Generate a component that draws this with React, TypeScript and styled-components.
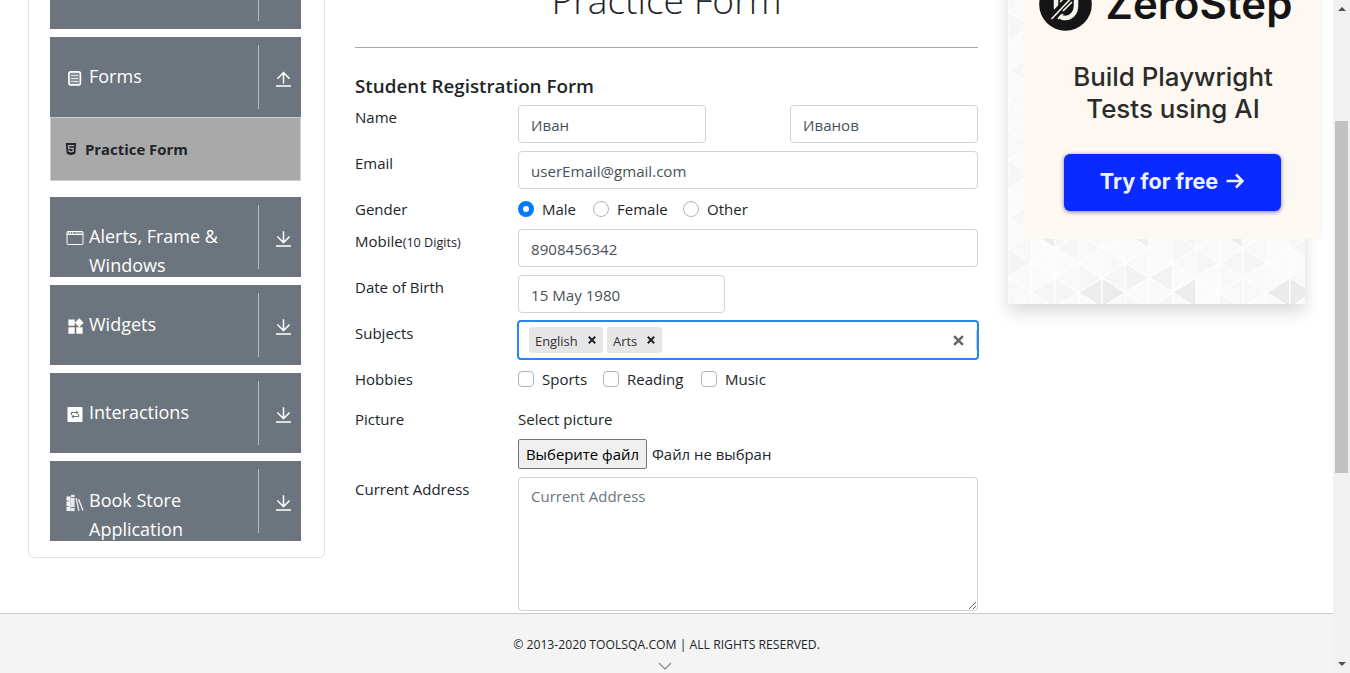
import React from 'react';
import styled, { createGlobalStyle } from 'styled-components';
import { MdWidgets } from 'react-icons/md';
import { FaHtml5 } from 'react-icons/fa';

const GlobalStyle = createGlobalStyle`
  *, *::before, *::after { box-sizing: border-box; }
  body {
    margin: 0;
    overflow: hidden;
    background: #fff;
    color: #212529;
    font: 400 15px/24px 'Open Sans', 'Noto Sans', sans-serif;
  }
`;

const Screen = styled.div`
  display: grid;
  grid-template-columns: minmax(0, 1fr) 17px;
  height: 673px;
  overflow: hidden;
`;

const Page = styled.div`
  display: flex;
  flex-direction: column;
  height: 673px;
  min-width: 0;
`;

const Columns = styled.main`
  display: grid;
  grid-template-columns: 297px 623px 315px;
  column-gap: 30px;
  align-items: start;
  height: 613px;
  padding-left: 28px;
  overflow: hidden;
`;

/* ---------- Sidebar ---------- */

const Sidebar = styled.nav`
  display: flex;
  flex-direction: column;
  gap: 8px;
  height: 658px;
  margin-top: -100px;
  padding: 0 23px 16px 21px;
  justify-content: flex-end;
  border: 1px solid #dee2e6;
  border-radius: 6px;
`;

const GroupHeader = styled.div`
  display: grid;
  grid-template-columns: 39px 169px 1fr;
  flex: none;
  width: 251px;
  height: 80px;
  overflow: hidden;
  background: #6c757d;
  color: #fff;
`;

const GroupIcon = styled.span`
  display: flex;
  justify-content: center;
  padding: 32px 0 0 11px;
  height: 52px;
  svg { display: block; }
`;

const GroupName = styled.span`
  padding: 25px 20px 0 0;
  height: 80px;
  font-size: 18px;
  line-height: 29px;
`;

const Toggle = styled.span`
  display: flex;
  justify-content: center;
  height: 64px;
  margin-top: 8px;
  padding: 25px 0 0 6px;
  border-left: 1px solid #b6babe;
`;

const SubMenu = styled.div`
  display: flex;
  align-items: center;
  gap: 7px;
  height: 64px;
  margin: -8px 0 8px;
  width: 251px;
  padding-left: 13px;
  background: #a9a9a9;
  border: 1px solid #cbd0d6;
  font-weight: 700;
  font-size: 14.9px;
`;

/* ---------- Form ---------- */

const Content = styled.section`
  display: flex;
  flex-direction: column;
  margin-top: -28px;
`;

const Title = styled.h1`
  height: 76px;
  margin: 0;
  border-bottom: 1px solid #a6a8aa;
  font-weight: 300;
  font-size: 37.2px;
  line-height: 56px;
  text-align: center;
`;

const SubTitle = styled.h5`
  margin: 26px 0 7px;
  font-weight: 600;
  font-size: 18.8px;
  line-height: 24px;
`;

const Row = styled.div<{ $h: number }>`
  display: grid;
  grid-template-columns: 163px 460px;
  align-items: start;
  height: ${(p) => p.$h}px;
`;

const Label = styled.label`
  white-space: nowrap;
  small { font-size: 12.6px; line-height: 1; }
`;

const Input = styled.input<{ $w?: number }>`
  width: ${(p) => (p.$w ? `${p.$w}px` : '100%')};
  height: 38px;
  padding: 4px 12px 2px;
  border: 1px solid #ced4da;
  border-radius: 4px;
  background: #fff;
  color: #495057;
  font: inherit;
  font-size: 15.1px;
  outline: none;
`;

const NamePair = styled.div`
  display: flex;
  justify-content: space-between;
`;

const Options = styled.div`
  display: flex;
  gap: 16px;
`;

const Option = styled.span<{ $w: number }>`
  display: flex;
  align-items: center;
  gap: 8px;
  width: ${(p) => p.$w}px;
  white-space: nowrap;
`;

const Mark = styled.span<{ $round?: boolean; $on?: boolean }>`
  flex: none;
  width: 16px;
  height: 16px;
  border: ${(p) => (p.$on ? '5px solid #007bff' : '1px solid #adb5bd')};
  border-radius: ${(p) => (p.$round ? '50%' : '4px')};
  background: #fff;
`;

const MultiSelect = styled.div`
  display: flex;
  align-items: center;
  gap: 4px;
  width: 462px;
  height: 40px;
  margin: -1px 0 0 -1px;
  padding-left: 10px;
  border: 2px solid #2684ff;
  border-radius: 4px;
`;

const Tag = styled.span<{ $w: number }>`
  display: flex;
  align-items: center;
  justify-content: space-between;
  width: ${(p) => p.$w}px;
  height: 26px;
  padding: 1px 7px 0 6px;
  border-radius: 2px;
  background: #e6e6e6;
  color: #333;
  font-size: 12.9px;
  svg { margin-top: -2px; }
`;

const ClearAll = styled.span`
  display: flex;
  align-items: center;
  width: 24px;
  height: 20px;
  margin-left: auto;
  border-right: 1px solid #ccc;
`;

const FileArea = styled.div`
  display: flex;
  flex-direction: column;
  gap: 8px;
`;

const FilePicker = styled.div`
  display: flex;
  align-items: center;
  gap: 5px;
  height: 30px;
  font-size: 14.9px;
`;

const FileButton = styled.button`
  width: 129px;
  height: 30px;
  padding: 0;
  border: 1px solid #767676;
  border-radius: 2px;
  background: #efefef;
  color: #000;
  font: inherit;
`;

const Address = styled.textarea`
  display: block;
  width: 460px;
  height: 134px;
  padding: 6px 12px;
  border: 1px solid #ced4da;
  border-radius: 4px;
  font: inherit;
  resize: vertical;
  &::placeholder { color: #6c757d; opacity: 1; }
`;

/* ---------- Advertisement ---------- */

const AdPanel = styled.aside`
  position: relative;
  width: 297px;
  height: 344px;
  margin-top: -40px;
  background: #fafafa;
  box-shadow: 0 8px 16px rgba(0, 0, 0, 0.15);
`;

const Pattern = styled.svg`
  display: block;
`;

const Banner = styled.div`
  position: absolute;
  left: 15px;
  top: 0;
  display: flex;
  flex-direction: column;
  align-items: center;
  width: 300px;
  height: 279px;
  background: #fdf8f2;
  font-family: Inter, sans-serif;
`;

const Brand = styled.div`
  display: flex;
  align-items: center;
  gap: 13px;
  height: 52px;
  margin: 18px 0 0 -14px;
  color: #151515;
  font-weight: 600;
  font-size: 42px;
  line-height: 52px;
  letter-spacing: 0.1px;
`;

const Slogan = styled.div`
  margin-top: 31px;
  color: #2c2b2a;
  font-weight: 500;
  font-size: 25.9px;
  line-height: 32px;
  text-align: center;
`;

const TryButton = styled.div`
  display: flex;
  align-items: center;
  justify-content: center;
  gap: 8px;
  width: 217px;
  height: 57px;
  margin: 29px 0 0 -2px;
  border-radius: 6px;
  background: #0a2bff;
  box-shadow: 0 1px 4px rgba(0, 0, 30, 0.5);
  color: #eef1ff;
  font-weight: 700;
  font-size: 21.6px;
  line-height: 53px;
  padding-bottom: 3px;
`;

/* ---------- Footer and scroll bar ---------- */

const Footer = styled.footer`
  display: flex;
  flex-direction: column;
  align-items: center;
  height: 60px;
  padding-top: 19px;
  border-top: 1px solid #c9c9c9;
  background: #f4f4f4;
  font-size: 12.2px;
`;

const Chevron = styled.svg`
  flex: none;
  margin: 5px 3px 0 0;
`;

const ScrollTrack = styled.div`
  display: flex;
  flex-direction: column;
  align-items: center;
  justify-content: space-between;
  padding: 7px 0 7px;
  background: #f1f1f1;
`;

const ScrollThumb = styled.div`
  width: 13px;
  height: 352px;
  margin: 0 0 79px;
  background: #c1c1c1;
`;

/* ---------- Icons ---------- */

const FormIcon = () => (
  <svg width="16" height="18" viewBox="0 0 16 18" fill="none">
    <rect x="1.9" y="2.9" width="11.5" height="13" rx="2" stroke="#fff" strokeWidth="1.6" fill="#89919a" />
    <path d="M4.2 6.5h7M4.2 9.5h7M4.2 12.5h7" stroke="#e2e5e8" strokeWidth="1" />
  </svg>
);

const WindowIcon = () => (
  <svg width="18" height="18" viewBox="0 0 18 18" fill="none" stroke="#fff">
    <rect x="1" y="2.5" width="16" height="13" rx="0.8" strokeWidth="1" />
    <path d="M1 5.5h16" strokeWidth="1" />
    <path d="M1.5 4h7" strokeDasharray="1.4 0.8" strokeWidth="1.6" />
    <path d="M9 4h8" strokeWidth="1.4" opacity="0.55" />
  </svg>
);

const RepeatIcon = () => (
  <svg width="16" height="18" viewBox="0 0 16 18">
    <rect x="0.5" y="2" width="15" height="15" rx="0.8" fill="#fff" />
    <g fill="none" stroke="#6c757d" strokeWidth="1.1">
      <path d="M4.5 10V7.5h5.500" />
      <path d="M11.500 9v2.500H6" />
    </g>
    <path d="M9.200 5.400l2.400 2.1-2.400 2.100zM6.800 9.400l-2.400 2.100 2.400 2.100z" fill="#6c757d" />
  </svg>
);

const BooksIcon = () => (
  <svg width="18" height="19" viewBox="0 0 18 19" fill="#fff">
    <path d="M0.5 3.500h4.200V18H0.500z" opacity="0.92" />
    <path d="M5 1.800h3.600V18.200H5z" opacity="0.85" />
    <path d="M0.500 8h2.200M0.500 13.500h2.200M5 4.500h3.600M5 14.500h3.600" stroke="#6c757d" strokeWidth="0.9" />
    <path d="M9.400 5.200l1.500-.3 2.700 12.800-1.500.4z" opacity="0.75" />
    <path d="M11.900 6.500l1.300-.5 4.500 11.400-1.200.5z" opacity="0.9" />
  </svg>
);

const ArrowIcon = ({ up }: { up?: boolean }) => (
  <svg width="17" height="18" viewBox="0 0 17 18" fill="none" stroke="#fff">
    {up ? (
      <path d="M8.500 2.800V13.500M2.400 8.700l6.100-6.100 6.100 6.100" strokeWidth="1.500" />
    ) : (
      <path d="M8.500 1.200V12.500M2.400 6.500l6.100 6.100 6.100-6.100" strokeWidth="1.500" />
    )}
    <path d="M1 16h15" strokeWidth="1.800" opacity="0.85" />
  </svg>
);

const Cross = ({ size, color, weight }: { size: number; color: string; weight: number }) => (
  <svg width={size} height={size} viewBox="0 0 10 10" stroke={color} strokeWidth={weight}>
    <path d="M1 1l8 8M9 1l-8 8" />
  </svg>
);

const BrandMark = () => (
  <svg width="53" height="53" viewBox="0 0 53 53">
    <circle cx="26.500" cy="26.500" r="26.300" fill="#151515" />
    <path d="M17 12v17c0 7 4 11 9.500 11S37 35 37 28V12" fill="none" stroke="#f6f2ed" strokeWidth="4.500" />
    <path d="M13 40L35 16" stroke="#151515" strokeWidth="8" />
    <path d="M12.500 41L31 21.500M24 36l-5 5M21 24l9-9M24 33l9-9" stroke="#f6f2ed" strokeWidth="1.600" />
  </svg>
);

const stepX = 23.5;
const stepY = 29.6;
const shades: Record<string, string> = {
  '4-10-L': '#ececec', '3-10-R': '#ededed', '7-10-R': '#ededed', '11-10-R': '#ebebeb', '12-10-L': '#ebebeb',
  '5-9-L': '#f2f2f2', '6-9-R': '#f3f3f3', '1-8-R': '#ededed', '5-8-R': '#f0f0f0', '9-8-R': '#ededed',
  '2-10-L': '#f5f5f5', '0-9-L': '#f5f5f5', '10-9-L': '#f5f5f5',
};
const tones = ['#f8f8f8', '#fafafa', '#f6f6f6', '#f9f9f9', '#fbfbfb'];
const toneAt = (n: number) => tones[Math.abs(n) % tones.length];

const Triangles = () => {
  const cells: React.ReactElement[] = [];
  for (let c = 0; c < 13; c += 1) {
    for (let r = -1; r < 13; r += 1) {
      const x0 = c * stepX;
      const x1 = x0 + stepX;
      const offset = c % 2 === 0 ? 0 : stepY / 2;
      const y = 21.8 + r * stepY;
      const left = y + offset;
      const right = y + (stepY / 2 - offset);
      cells.push(
        <path
          key={`${c}-${r}-L`}
          d={`M${x0} ${left}V${left + stepY}L${x1} ${left + stepY / 2}Z`}
          fill={shades[`${c}-${r}-L`] ?? toneAt(c * 3 + r * 2)}
        />,
        <path
          key={`${c}-${r}-R`}
          d={`M${x1} ${right}V${right + stepY}L${x0} ${right + stepY / 2}Z`}
          fill={shades[`${c}-${r}-R`] ?? toneAt(c + r * 3 + 1)}
        />,
      );
    }
  }
  return (
    <Pattern width="297" height="344" viewBox="0 0 297 344">
      <g stroke="#fefefe" strokeWidth="1.2">{cells}</g>
    </Pattern>
  );
};

type GroupProps = { icon: React.ReactNode; name: string; open?: boolean };
const Group = ({ icon, name, open }: GroupProps) => (
  <GroupHeader>
    <GroupIcon>{icon}</GroupIcon>
    <GroupName>{name}</GroupName>
    <Toggle><ArrowIcon up={open} /></Toggle>
  </GroupHeader>
);

export default function App() {
  return (
    <Screen>
      <GlobalStyle />
      <Page>
        <Columns>
          <Sidebar>
            <Group icon={null} name="" />
            <Group icon={<FormIcon />} name="Forms" open />
            <SubMenu><FaHtml5 size={14} />Practice Form</SubMenu>
            <Group icon={<WindowIcon />} name="Alerts, Frame & Windows" />
            <Group icon={<MdWidgets size={19} />} name="Widgets" />
            <Group icon={<RepeatIcon />} name="Interactions" />
            <Group icon={<BooksIcon />} name="Book Store Application" />
          </Sidebar>

          <Content>
            <Title>Practice Form</Title>
            <SubTitle>Student Registration Form</SubTitle>
            <Row $h={46}>
              <Label>Name</Label>
              <NamePair>
                <Input $w={188} defaultValue="Иван" />
                <Input $w={188} defaultValue="Иванов" />
              </NamePair>
            </Row>
            <Row $h={46}>
              <Label>Email</Label>
              <Input defaultValue="userEmail@gmail.com" />
            </Row>
            <Row $h={32}>
              <Label>Gender</Label>
              <Options>
                <Option $w={59}><Mark $round $on />Male</Option>
                <Option $w={74}><Mark $round />Female</Option>
                <Option $w={66}><Mark $round />Other</Option>
              </Options>
            </Row>
            <Row $h={46}>
              <Label>Mobile<small>(10 Digits)</small></Label>
              <Input defaultValue="8908456342" />
            </Row>
            <Row $h={46}>
              <Label>Date of Birth</Label>
              <Input $w={207} defaultValue="15 May 1980" />
            </Row>
            <Row $h={46}>
              <Label>Subjects</Label>
              <MultiSelect>
                <Tag $w={74}>English<Cross size={8} color="#222" weight={2.4} /></Tag>
                <Tag $w={55}>Arts<Cross size={8} color="#222" weight={2.4} /></Tag>
                <ClearAll><Cross size={11} color="#666" weight={2.3} /></ClearAll>
              </MultiSelect>
            </Row>
            <Row $h={40}>
              <Label>Hobbies</Label>
              <Options>
                <Option $w={69}><Mark />Sports</Option>
                <Option $w={82}><Mark />Reading</Option>
                <Option $w={66}><Mark />Music</Option>
              </Options>
            </Row>
            <Row $h={70}>
              <Label>Picture</Label>
              <FileArea>
                <Label>Select picture</Label>
                <FilePicker>
                  <FileButton type="button">Выберите файл</FileButton>
                  Файл не выбран
                </FilePicker>
              </FileArea>
            </Row>
            <Row $h={134}>
              <Label>Current Address</Label>
              <Address placeholder="Current Address" />
            </Row>
          </Content>

          <AdPanel>
            <Triangles />
            <Banner>
              <Brand><BrandMark />ZeroStep</Brand>
              <Slogan>Build Playwright<br />Tests using AI</Slogan>
              <TryButton>
                Try for free
                <svg width="18" height="16" viewBox="0 0 18 16" fill="none" stroke="#eef1ff" strokeWidth="2.5">
                  <path d="M0.500 8h16M10 1.500L16.500 8 10 14.500" />
                </svg>
              </TryButton>
            </Banner>
          </AdPanel>
        </Columns>
        <Footer>
          <span>© 2013-2020 TOOLSQA.COM | ALL RIGHTS RESERVED.</span>
          <Chevron width="14" height="8" viewBox="0 0 14 8" fill="none" stroke="#888" strokeWidth="1.2">
            <path d="M1 1l6 6 6-6" />
          </Chevron>
        </Footer>
      </Page>
      <ScrollTrack>
        <svg width="8" height="4" viewBox="0 0 8 4" fill="#505050"><path d="M4 0l4 4H0z" /></svg>
        <ScrollThumb />
        <svg width="8" height="4" viewBox="0 0 8 4" fill="#505050"><path d="M0 0h8L4 4z" /></svg>
      </ScrollTrack>
    </Screen>
  );
}
